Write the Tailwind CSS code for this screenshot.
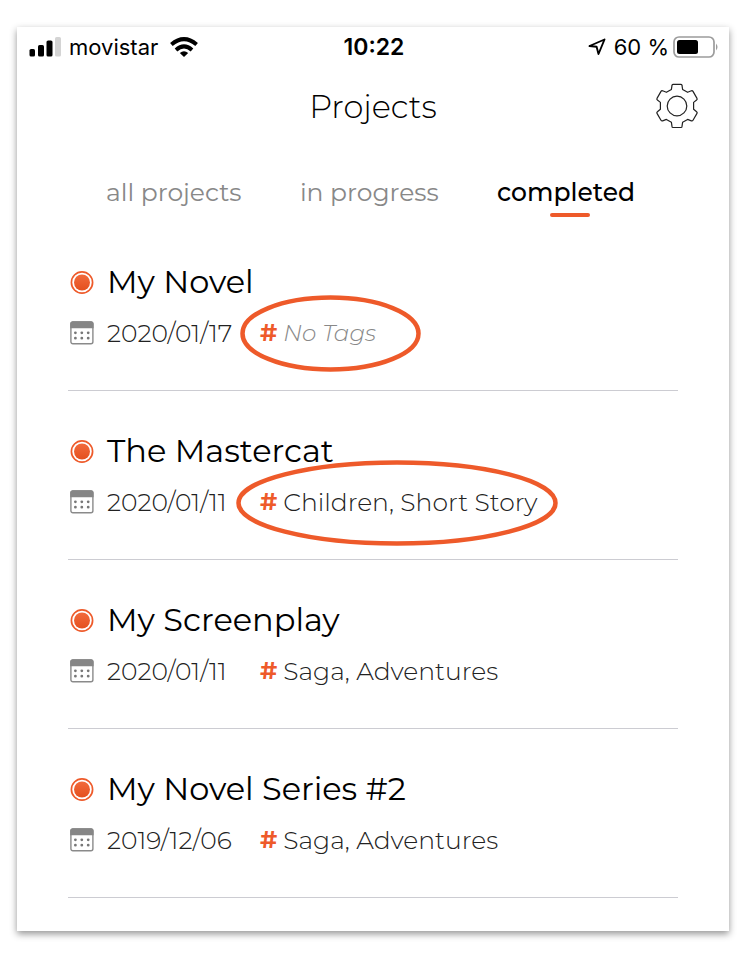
<!DOCTYPE html>
<html lang="en">
<head>
  <meta charset="UTF-8" />
  <meta name="viewport" content="width=device-width, initial-scale=1" />
  <title>Projects</title>
  <script src="https://cdn.jsdelivr.net/npm/@tailwindcss/browser@4"></script>
  <style>
    body {
      font-family: Montserrat, Inter, sans-serif;
    }
  </style>
</head>
<body class="bg-white text-black min-h-screen flex flex-col">
  <!-- Shared icons -->
  <svg class="absolute w-0 h-0" aria-hidden="true">
    <defs>
      <linearGradient id="dotFill" x1="0" y1="0" x2="0" y2="1">
        <stop offset="0" stop-color="#f26a3c" />
        <stop offset="1" stop-color="#e4501f" />
      </linearGradient>
    </defs>
    <symbol id="bullet" viewBox="0 0 24 24">
      <circle cx="12" cy="12.5" r="10.6" fill="#fff" stroke="#ee5a2a" stroke-width="1.7" />
      <circle cx="12" cy="12.5" r="8" fill="url(#dotFill)" />
    </symbol>
    <symbol id="calendar" viewBox="0 0 24 24">
      <rect x="0.9" y="1" width="22" height="21.8" rx="2" fill="#fff" stroke="#8a8a8a" stroke-width="1.4" />
      <path d="M0.2 7.2V2.8Q0.2 0.3 2.6 0.3H21.2Q23.6 0.3 23.6 2.8V7.2Z" fill="#868686" />
      <path d="M5.4 11.8h.01M11.8 11.8h.01M18.2 11.8h.01M5.4 17.2h.01M11.8 17.2h.01M18.2 17.2h.01" stroke="#777" stroke-width="2.8" stroke-linecap="round" />
    </symbol>
  </svg>

  <main class="flex-grow mt-[27px] mb-[22px] ml-[17px] mr-[21px] bg-white shadow-[0_3px_7px_rgba(0,0,0,0.42)]">
    <!-- Status bar -->
    <div class="grid grid-cols-3 items-center h-10 pl-3 pr-[10px] text-[22px] font-[Inter]">
      <div class="flex items-center gap-2">
        <svg class="w-8 h-5" viewBox="0 0 32 20">
          <rect x="0.5" y="12" width="5.5" height="7.5" rx="1.6" />
          <rect x="9" y="8" width="6" height="11.5" rx="1.6" />
          <rect x="17.5" y="3.5" width="6" height="16" rx="1.6" />
          <rect x="26" y="0" width="6" height="19.5" rx="1.6" fill="#d4d4d4" />
        </svg>
        <span>movistar</span>
        <svg class="w-7 h-5 ml-1" viewBox="0 0 28 20" stroke="#000" stroke-width="4" fill="none">
          <path d="M1.4 7.6Q14 -3.2 26.6 7.6" />
          <path d="M6 12.9Q14 6 22 12.9" />
          <path d="M14 20L9.8 16Q14 12.6 18.2 16Z" fill="#000" stroke="none" />
        </svg>
      </div>
      <span class="text-center text-[23px] font-semibold">10:22</span>
      <div class="flex items-center justify-end gap-1">
        <svg class="w-[18px] h-[18px] mr-1" viewBox="0 0 18 18" fill="none" stroke="#000" stroke-width="1.9" stroke-linejoin="round">
          <path d="M16.5 1.5L1.5 8L8.6 8.8L10.5 16Z" />
        </svg>
        <span>60 %</span>
        <svg class="w-[46px] h-[22px]" viewBox="0 0 46 22">
          <rect x="1" y="1" width="40" height="20" rx="5" fill="none" stroke="#9c9c9c" stroke-width="1.7" />
          <rect x="4" y="4" width="21" height="14" rx="2.5" />
          <path d="M43 7.5Q46 11 43 14.5Z" fill="#9c9c9c" />
        </svg>
      </div>
    </div>

    <!-- Title -->
    <header class="relative flex items-center justify-center h-20">
      <h1 class="text-[32px] font-light">Projects</h1>
      <button type="button" aria-label="Settings" class="absolute right-[29px] top-4">
        <svg class="w-[46px] h-[46px]" viewBox="0 0 46 46" fill="none" stroke="#222" stroke-width="1.2" stroke-linejoin="round">
          <path d="M19 1.3H27Q28 1.3 28 2.4L28.6 6.4L33.6 9.3L37.4 7.8Q38.5 7.5 39 8.4L43 15.4Q43.5 16.4 42.6 17L39.6 19.4V26.2L42.6 28.8Q43.5 29.5 43 30.4L39 37.3Q38.5 38.2 37.4 37.9L33.6 36.4L28.6 39.3L28 43.4Q28 44.5 27 44.5H19Q18 44.5 18 43.4L17.4 39.3L12.4 36.4L8.6 37.9Q7.5 38.2 7 37.3L3 30.4Q2.5 29.5 3.4 28.8L6.4 26.2V19.4L3.4 17Q2.5 16.4 3 15.4L7 8.4Q7.5 7.5 8.6 7.8L12.4 9.3L17.4 6.4L18 2.4Q18 1.3 19 1.3Z" />
          <circle cx="23" cy="23" r="9.8" />
        </svg>
      </button>
    </header>

    <!-- Tabs -->
    <nav class="flex justify-between items-start h-[75px] pt-6 pl-[89px] pr-[94px] text-[25px] leading-[42px] text-[#888]">
      <a href="#all">all projects</a>
      <a href="#progress">in progress</a>
      <a href="#completed" class="flex flex-col items-center font-medium text-black">
        completed
        <span class="w-10 h-1 ml-2 rounded-full bg-[#ee5a2a]"></span>
      </a>
    </nav>

    <!-- Projects -->
    <ul class="mx-[51px]">
      <li class="pt-[37px] pb-[41px] pl-[2px] border-b border-[#ccccd2]">
        <div class="flex items-center gap-[13px] h-[46px]">
          <svg class="w-6 h-6"><use href="#bullet" /></svg>
          <h2 class="text-[32px]">My Novel</h2>
        </div>
        <div class="flex items-center gap-[13px] h-8 mt-3 text-[25px] leading-8 font-light text-[#222]">
          <svg class="w-6 h-6"><use href="#calendar" /></svg>
          <time class="w-[140px]">2020/01/17</time>
          <div class="relative flex items-center gap-[6px]">
            <span class="text-[24px] font-bold text-[#ee5a2a]">#</span>
            <span class="text-[23px] italic text-[#888]">No Tags</span>
            <svg class="absolute -left-5 -top-[22px] w-[181px] h-[77px] max-w-none" viewBox="0 0 181 77" fill="none" stroke="#ee5a2a" stroke-width="4.5">
              <ellipse cx="90.5" cy="38.5" rx="88" ry="36" />
            </svg>
          </div>
        </div>
      </li>
      <li class="pt-[37px] pb-[41px] pl-[2px] border-b border-[#ccccd2]">
        <div class="flex items-center gap-[13px] h-[46px]">
          <svg class="w-6 h-6"><use href="#bullet" /></svg>
          <h2 class="text-[32px]">The Mastercat</h2>
        </div>
        <div class="flex items-center gap-[13px] h-8 mt-3 text-[25px] leading-8 font-light text-[#222]">
          <svg class="w-6 h-6"><use href="#calendar" /></svg>
          <time class="w-[140px]">2020/01/11</time>
          <div class="relative flex items-center gap-[6px]">
            <span class="text-[24px] font-bold text-[#ee5a2a]">#</span>
            <span>Children, Short Story</span>
            <svg class="absolute -left-6 -top-[26px] w-[322px] h-[86px] max-w-none" viewBox="0 0 322 86" fill="none" stroke="#ee5a2a" stroke-width="4.5">
              <ellipse cx="161" cy="43" rx="158.5" ry="40.5" />
            </svg>
          </div>
        </div>
      </li>
      <li class="pt-[37px] pb-[41px] pl-[2px] border-b border-[#ccccd2]">
        <div class="flex items-center gap-[13px] h-[46px]">
          <svg class="w-6 h-6"><use href="#bullet" /></svg>
          <h2 class="text-[32px]">My Screenplay</h2>
        </div>
        <div class="flex items-center gap-[13px] h-8 mt-3 text-[25px] leading-8 font-light text-[#222]">
          <svg class="w-6 h-6"><use href="#calendar" /></svg>
          <time class="w-[140px]">2020/01/11</time>
          <div class="flex items-center gap-[6px]">
            <span class="text-[24px] font-bold text-[#ee5a2a]">#</span>
            <span>Saga, Adventures</span>
          </div>
        </div>
      </li>
      <li class="pt-[37px] pb-[41px] pl-[2px] border-b border-[#ccccd2]">
        <div class="flex items-center gap-[13px] h-[46px]">
          <svg class="w-6 h-6"><use href="#bullet" /></svg>
          <h2 class="text-[32px]">My Novel Series #2</h2>
        </div>
        <div class="flex items-center gap-[13px] h-8 mt-3 text-[25px] leading-8 font-light text-[#222]">
          <svg class="w-6 h-6"><use href="#calendar" /></svg>
          <time class="w-[140px]">2019/12/06</time>
          <div class="flex items-center gap-[6px]">
            <span class="text-[24px] font-bold text-[#ee5a2a]">#</span>
            <span>Saga, Adventures</span>
          </div>
        </div>
      </li>
    </ul>
  </main>
</body>
</html>
